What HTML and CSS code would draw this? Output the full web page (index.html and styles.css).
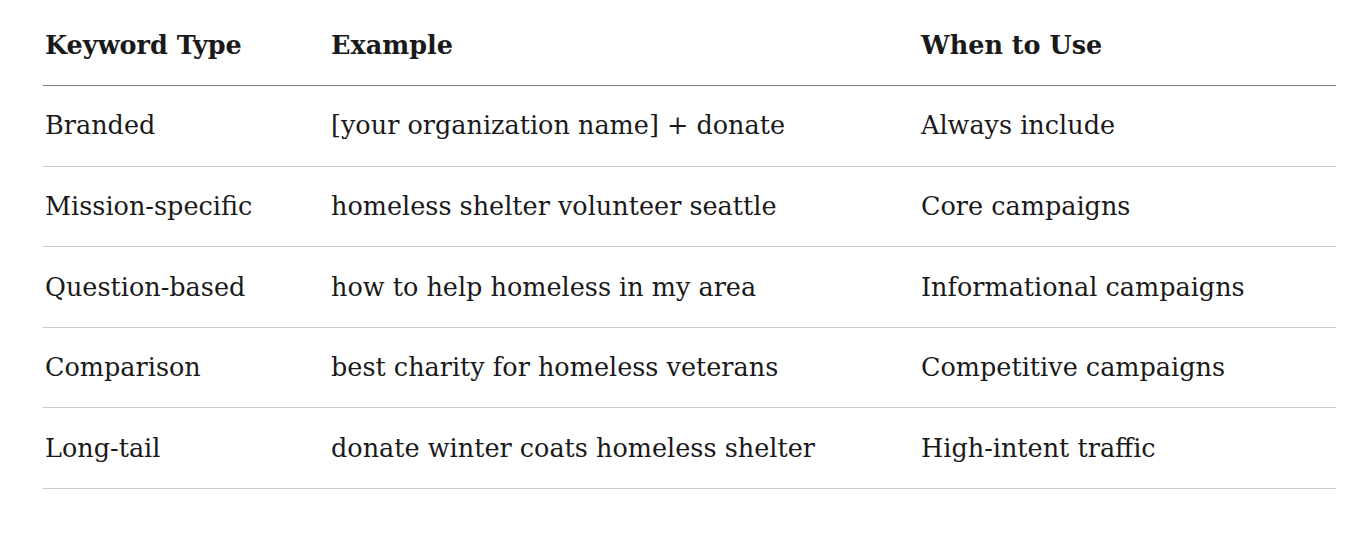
FILE: index.html
```html
<!DOCTYPE html>
<html lang="en">
<head>
<meta charset="utf-8">
<title>Keyword Types</title>
<link rel="stylesheet" href="styles.css">
</head>
<body>
<div class="wrap">
<table class="kw-table">
  <colgroup>
    <col class="c1">
    <col class="c2">
    <col class="c3">
  </colgroup>
  <thead>
    <tr><th>Keyword Type</th><th>Example</th><th>When to Use</th></tr>
  </thead>
  <tbody>
    <tr><td>Branded</td><td>[your organization name] + donate</td><td>Always include</td></tr>
    <tr><td>Mission-specific</td><td>homeless shelter volunteer seattle</td><td>Core campaigns</td></tr>
    <tr><td>Question-based</td><td>how to help homeless in my area</td><td>Informational campaigns</td></tr>
    <tr><td>Comparison</td><td>best charity for homeless veterans</td><td>Competitive campaigns</td></tr>
    <tr><td>Long-tail</td><td>donate winter coats homeless shelter</td><td>High-intent traffic</td></tr>
  </tbody>
</table>
</div>
</body>
</html>
```
FILE: styles.css
```css
html, body {
  margin: 0;
  padding: 0;
  background: #ffffff;
}
.wrap {
  padding: 5.4px 28px 0 43px;
}
.kw-table {
  width: 1293px;
  border-collapse: collapse;
  table-layout: fixed;
  font-family: "DejaVu Serif", "Liberation Serif", serif;
  font-size: 25.5px;
  color: #1a1a1a;
}
.c1 { width: 286px; }
.c2 { width: 590px; }
.c3 { width: 417px; }
.kw-table th,
.kw-table td {
  text-align: left;
  padding: 20.5px 0 19.5px 2px;
  line-height: 39.6px;
  white-space: nowrap;
  vertical-align: middle;
}
.kw-table th {
  font-weight: bold;
  border-bottom: 1px solid #7a7a7a;
}
.kw-table td {
  font-weight: normal;
  border-bottom: 1px solid #cccccc;
}
```
